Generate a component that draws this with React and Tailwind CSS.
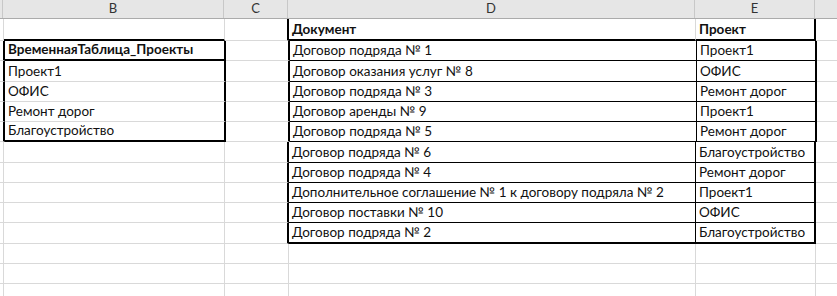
import React from 'react';

const COLS = ['w-[3px]', 'w-[221px]', 'w-[64px]', 'w-[407px]', 'w-[120px]', 'flex-1'];
const LETTERS = ['', 'B', 'C', 'D', 'E', ''];

const ROW_H = [
  'h-[22px]',
  'h-[20.25px]', 'h-[20.25px]', 'h-[20.25px]', 'h-[20.25px]', 'h-[20.25px]',
  'h-[20.25px]', 'h-[20.25px]', 'h-[20.25px]', 'h-[20.25px]', 'h-[20.25px]',
  'h-[20.25px]', 'h-[20.25px]', 'h-[20.25px]',
];

const RIGHT = {
  g: 'border-r border-r-[#d9d9d9]',
  b1: 'border-r border-r-black',
  b2: 'border-r-2 border-r-black',
  n: '',
};
const BOTTOM = {
  g: 'border-b border-b-[#d9d9d9]',
  b1: 'border-b border-b-black',
  b2: 'border-b-2 border-b-black',
};

const projects = ['Проект1', 'ОФИС', 'Ремонт дорог', 'Благоустройство'];

const docs = [
  ['Договор подряда № 1', 'Проект1'],
  ['Договор оказания услуг № 8', 'ОФИС'],
  ['Договор подряда № 3', 'Ремонт дорог'],
  ['Договор аренды № 9', 'Проект1'],
  ['Договор подряда № 5', 'Ремонт дорог'],
  ['Договор подряда № 6', 'Благоустройство'],
  ['Договор подряда № 4', 'Ремонт дорог'],
  ['Дополнительное соглашение № 1 к договору подряла № 2', 'Проект1'],
  ['Договор поставки № 10', 'ОФИС'],
  ['Договор подряда № 2', 'Благоустройство'],
];

// r: sheet row (1-based), c: column index (0 = A ... 5 = F)
function cellSpec(r, c) {
  const s = { text: '', bold: false, right: 'g', bottom: 'g' };
  if (c === 0) {
    if (r >= 2 && r <= 6) s.right = 'b2';
  } else if (c === 1) {
    if (r >= 2 && r <= 6) s.right = 'b2';
    if (r === 1 || r === 2 || r === 6) s.bottom = 'b2';
    if (r === 2) {
      s.text = 'ВременнаяТаблица_Проекты';
      s.bold = true;
    }
    if (r >= 3 && r <= 6) s.text = projects[r - 3];
  } else if (c === 2) {
    if (r <= 11) s.right = 'b2';
  } else if (c === 3) {
    if (r === 1) {
      s.text = 'Документ';
      s.bold = true;
      s.bottom = 'b2';
    } else if (r <= 11) {
      s.text = docs[r - 2][0];
      s.right = 'b1';
      s.bottom = r === 11 ? 'b2' : 'b1';
    }
  } else if (c === 4) {
    if (r <= 11) s.right = 'b2';
    if (r === 1) {
      s.text = 'Проект';
      s.bold = true;
      s.bottom = 'b2';
    } else if (r <= 11) {
      s.text = docs[r - 2][1];
      s.bottom = r === 11 ? 'b2' : 'b1';
    }
  } else {
    s.right = 'n';
  }
  return s;
}

export default function App() {
  return (
    <div className="w-[837px] h-[296px] overflow-hidden bg-white font-[Lato,'Noto_Sans',sans-serif] text-[#111]">
      {/* column headers */}
      <div className="flex h-[19px] bg-[#e6e6e6] border-b border-b-[#ababab]">
        {COLS.map((w, c) => (
          <div
            key={c}
            className={`${w} shrink-0 flex items-center justify-center text-[13px] text-[#333] ${c < 5 ? 'border-r border-r-[#c8c8c8]' : ''}`}
          >
            {LETTERS[c]}
          </div>
        ))}
      </div>

      {/* sheet rows */}
      {ROW_H.map((h, i) => {
        const r = i + 1;
        return (
          <div key={r} className={`flex ${h}`}>
            {COLS.map((w, c) => {
              const s = cellSpec(r, c);
              return (
                <div
                  key={c}
                  className={`${w} shrink-0 flex items-end pl-[3px] pb-[2px] text-[13.5px] leading-[16px] whitespace-nowrap ${RIGHT[s.right]} ${BOTTOM[s.bottom]} ${s.bold ? 'font-bold' : ''}`}
                >
                  {s.text}
                </div>
              );
            })}
          </div>
        );
      })}
    </div>
  );
}
